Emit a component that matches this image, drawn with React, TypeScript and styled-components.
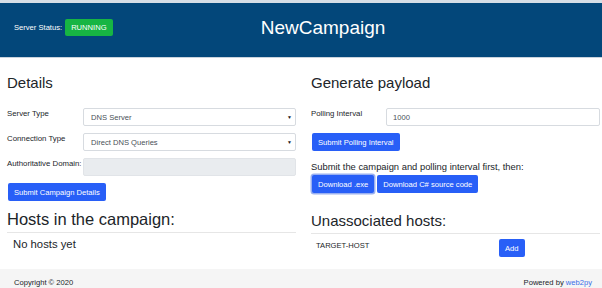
import styled, { createGlobalStyle } from 'styled-components';

const GlobalStyle = createGlobalStyle`
  html, body {
    margin: 0;
    padding: 0;
    background: #ffffff;
  }
  body {
    font-family: "Liberation Sans", Arial, sans-serif;
    color: #212529;
  }
  * {
    box-sizing: border-box;
  }
`;

const Page = styled.div`
  width: 602px;
  height: 288px;
  overflow: hidden;
  display: flex;
  flex-direction: column;
`;

const TopStrip = styled.div`
  height: 3px;
  background: #d6dee6;
`;

const Header = styled.header`
  height: 55px;
  background: #03477a;
  border-bottom: 1px solid #c9d3dd;
  display: grid;
  grid-template-columns: 150px 1fr 106px;
  align-items: center;
`;

const StatusBlock = styled.div`
  display: flex;
  align-items: center;
  gap: 3px;
  padding-left: 14px;
  margin-top: -6px;
`;

const StatusLabel = styled.span`
  color: #ffffff;
  font-size: 7.6px;
`;

const Badge = styled.span`
  display: inline-flex;
  align-items: center;
  height: 17px;
  padding: 0 6px;
  background: #17b543;
  color: #ffffff;
  font-size: 7.6px;
  border-radius: 2px;
`;

const Title = styled.h1`
  margin: 0;
  text-align: center;
  color: #ffffff;
  font-size: 19px;
  font-weight: 400;
  margin-top: -4px;
`;

const Main = styled.main`
  flex: 1;
  display: grid;
  grid-template-columns: 289px 289px;
  column-gap: 15px;
  padding: 0 2px 0 7px;
`;

const Column = styled.section`
  display: flex;
  flex-direction: column;
`;

const SectionTitle = styled.h3<{ $size?: number }>`
  margin: 0;
  font-size: ${({ $size }) => $size ?? 15}px;
  font-weight: 400;
  line-height: 18px;
  color: #212529;
`;

const DetailsTitle = styled(SectionTitle)`
  margin-top: 16px;
  margin-bottom: 16px;
`;

const ListTitle = styled(SectionTitle)<{ $gap: number; $pad: number }>`
  margin-top: ${({ $gap }) => $gap}px;
  padding-bottom: ${({ $pad }) => $pad}px;
  border-bottom: 1px solid #e6e6e6;
`;

const FormRow = styled.div<{ $labelWidth: number }>`
  display: grid;
  grid-template-columns: ${({ $labelWidth }) => $labelWidth}px 1fr;
  align-items: start;
  margin-bottom: 7px;
`;

const Label = styled.label`
  font-size: 7.8px;
  line-height: 10px;
  padding-top: 1px;
  color: #212529;
`;

const SelectWrap = styled.div`
  position: relative;
  height: 18px;
`;

const Select = styled.select`
  appearance: none;
  display: block;
  width: 100%;
  height: 18px;
  border: 1px solid #d7dbe0;
  border-radius: 2px;
  background: #ffffff;
  padding: 0 7px;
  font-family: inherit;
  font-size: 7.6px;
  color: #495057;
`;

const Caret = styled.span`
  position: absolute;
  right: 4px;
  top: 6px;
  font-size: 5px;
  color: #222;
  pointer-events: none;
`;

const TextInput = styled.input`
  display: block;
  width: 100%;
  height: 18px;
  border: 1px solid #d7dbe0;
  border-radius: 2px;
  background: #ffffff;
  padding: 0 6px;
  font-family: inherit;
  font-size: 7.6px;
  color: #495057;

  &:disabled {
    background: #e9ecef;
    border-color: #e1e4e8;
  }
`;

const Button = styled.button<{ $focused?: boolean }>`
  height: 18px;
  padding: 0 6px;
  border: none;
  border-radius: 2px;
  background: #285ff7;
  color: #ffffff;
  font-family: inherit;
  font-size: 7.6px;
  white-space: nowrap;
  box-shadow: ${({ $focused }) =>
    $focused ? '0 0 0 1.5px rgba(120, 150, 235, 0.75)' : 'none'};
`;

const ButtonRow = styled.div`
  display: flex;
  gap: 3px;
  padding-left: 1px;
`;

const Note = styled.p`
  margin: 10px 0 3px;
  font-size: 9.4px;
  line-height: 11px;
`;

const EmptyText = styled.p`
  margin: 5px 0 0 6px;
  font-size: 11.3px;
  line-height: 13px;
`;

const HostRow = styled.div`
  display: grid;
  grid-template-columns: 188px auto;
  justify-content: start;
  align-items: start;
  padding-top: 5px;
`;

const HostName = styled.span`
  font-size: 7.6px;
  padding: 2px 0 0 5px;
`;

const Footer = styled.footer`
  height: 19px;
  background: #f5f5f5;
  display: flex;
  justify-content: space-between;
  align-items: flex-end;
  padding: 0 10px 0 14px;
  font-size: 7.6px;
  line-height: 10px;
  color: #212529;
`;

const FooterLink = styled.a`
  color: #3a6ee8;
  text-decoration: none;
`;

export default function App() {
  return (
    <Page>
      <GlobalStyle />
      <TopStrip />
      <Header>
        <StatusBlock>
          <StatusLabel>Server Status:</StatusLabel>
          <Badge>RUNNING</Badge>
        </StatusBlock>
        <Title>NewCampaign</Title>
        <div />
      </Header>

      <Main>
        <Column>
          <DetailsTitle>Details</DetailsTitle>
          <FormRow $labelWidth={76}>
            <Label>Server Type</Label>
            <SelectWrap>
              <Select defaultValue="dns">
                <option value="dns">DNS Server</option>
              </Select>
              <Caret>▼</Caret>
            </SelectWrap>
          </FormRow>
          <FormRow $labelWidth={76}>
            <Label>Connection Type</Label>
            <SelectWrap>
              <Select defaultValue="direct">
                <option value="direct">Direct DNS Queries</option>
              </Select>
              <Caret>▼</Caret>
            </SelectWrap>
          </FormRow>
          <FormRow $labelWidth={76}>
            <Label>Authoritative Domain:</Label>
            <TextInput disabled />
          </FormRow>
          <ButtonRow>
            <Button>Submit Campaign Details</Button>
          </ButtonRow>

          <ListTitle $size={16.5} $gap={9} $pad={4}>
            Hosts in the campaign:
          </ListTitle>
          <EmptyText>No hosts yet</EmptyText>
        </Column>

        <Column>
          <DetailsTitle>Generate payload</DetailsTitle>
          <FormRow $labelWidth={75}>
            <Label>Polling Interval</Label>
            <TextInput defaultValue="1000" />
          </FormRow>
          <ButtonRow>
            <Button>Submit Polling Interval</Button>
          </ButtonRow>
          <Note>Submit the campaign and polling interval first, then:</Note>
          <ButtonRow>
            <Button $focused>Download .exe</Button>
            <Button>Download C# source code</Button>
          </ButtonRow>

          <ListTitle $gap={19} $pad={3}>
            Unassociated hosts:
          </ListTitle>
          <HostRow>
            <HostName>TARGET-HOST</HostName>
            <Button>Add</Button>
          </HostRow>
        </Column>
      </Main>

      <Footer>
        <span>Copyright © 2020</span>
        <span>
          Powered by <FooterLink href="#">web2py</FooterLink>
        </span>
      </Footer>
    </Page>
  );
}
